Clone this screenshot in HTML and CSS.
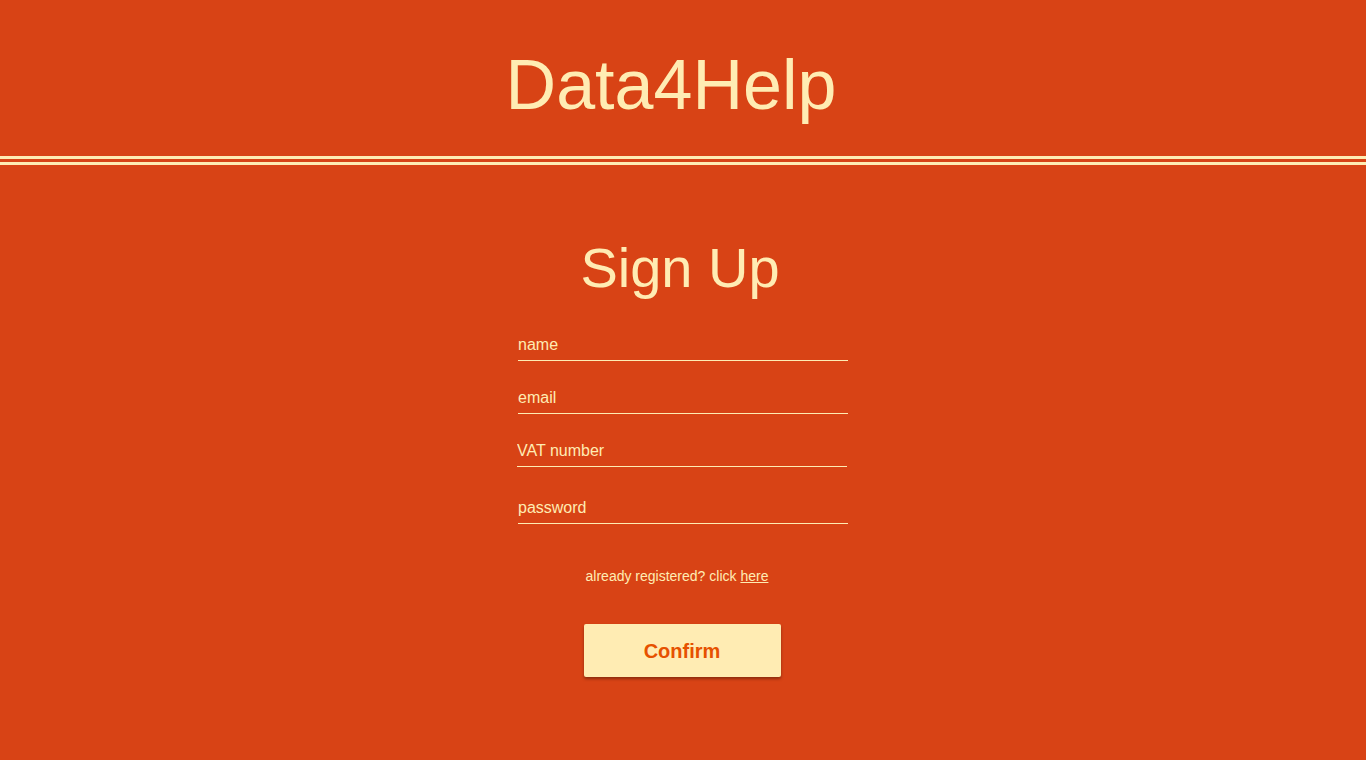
FILE: index.html
```html
<!DOCTYPE html>
<html>
<head>
<meta charset="utf-8">
<title>Data4Help - Sign Up</title>
<link rel="stylesheet" href="styles.css">
</head>
<body>
<header class="topbar">
  <h1 class="brand">Data4Help</h1>
</header>
<main class="signup">
  <h2 class="signup-title">Sign Up</h2>
  <form class="signup-form">
    <input class="field" type="text" placeholder="name">
    <input class="field" type="email" placeholder="email">
    <input class="field field-vat" type="text" placeholder="VAT number">
    <input class="field field-pass" type="password" placeholder="password">
    <p class="login-hint">already registered? click <a href="#" class="login-link">here</a></p>
    <button type="button" class="confirm">Confirm</button>
  </form>
</main>
</body>
</html>
```
FILE: styles.css
```css
html, body {
  margin: 0;
  padding: 0;
}
body {
  background: #d84315;
  color: #ffecb3;
  font-family: "Liberation Sans", Arial, sans-serif;
  height: 760px;
  overflow: hidden;
}
.topbar {
  height: 165px;
  box-sizing: border-box;
  padding-top: 50px;
  border-bottom: 9px double #ffecb3;
}
.brand {
  margin: 0;
  font-weight: 400;
  font-size: 70px;
  line-height: 1;
  text-align: center;
  padding-right: 24px;
}
.signup {
  display: flex;
  flex-direction: column;
  align-items: center;
}
.signup-title {
  margin: 75px 0 0;
  font-weight: 400;
  font-size: 56px;
  line-height: 1;
  padding-right: 6px;
}
.signup-form {
  display: flex;
  flex-direction: column;
  align-items: center;
  margin-top: 35px;
}
.field {
  width: 330px;
  height: 30px;
  box-sizing: border-box;
  padding: 1px 0 2px 0;
  margin: 0 0 23px 0;
  border: 0;
  border-bottom: 1px solid #ffecb3;
  background: transparent;
  color: #ffecb3;
  font-family: "Liberation Sans", Arial, sans-serif;
  font-size: 16px;
  outline: none;
}
.field::placeholder {
  color: #ffecb3;
  opacity: 1;
}
.field-vat {
  position: relative;
  left: -1px;
  margin-bottom: 27px;
}
.field-pass {
  margin-bottom: 0;
}
.login-hint {
  margin: 44px 0 0;
  font-size: 14px;
  line-height: 16px;
  padding-right: 12px;
}
.login-link {
  color: #ffecb3;
  text-decoration: underline;
}
.confirm {
  margin: 40px 2px 0 0;
  width: 197px;
  height: 53px;
  padding: 2px 0 0;
  background: #ffecb3;
  color: #e65100;
  border: 0;
  border-radius: 2px;
  box-shadow: 0 2px 3px rgba(0, 0, 0, 0.35);
  font-family: "Liberation Sans", Arial, sans-serif;
  font-weight: 700;
  font-size: 20px;
  cursor: pointer;
}
```
